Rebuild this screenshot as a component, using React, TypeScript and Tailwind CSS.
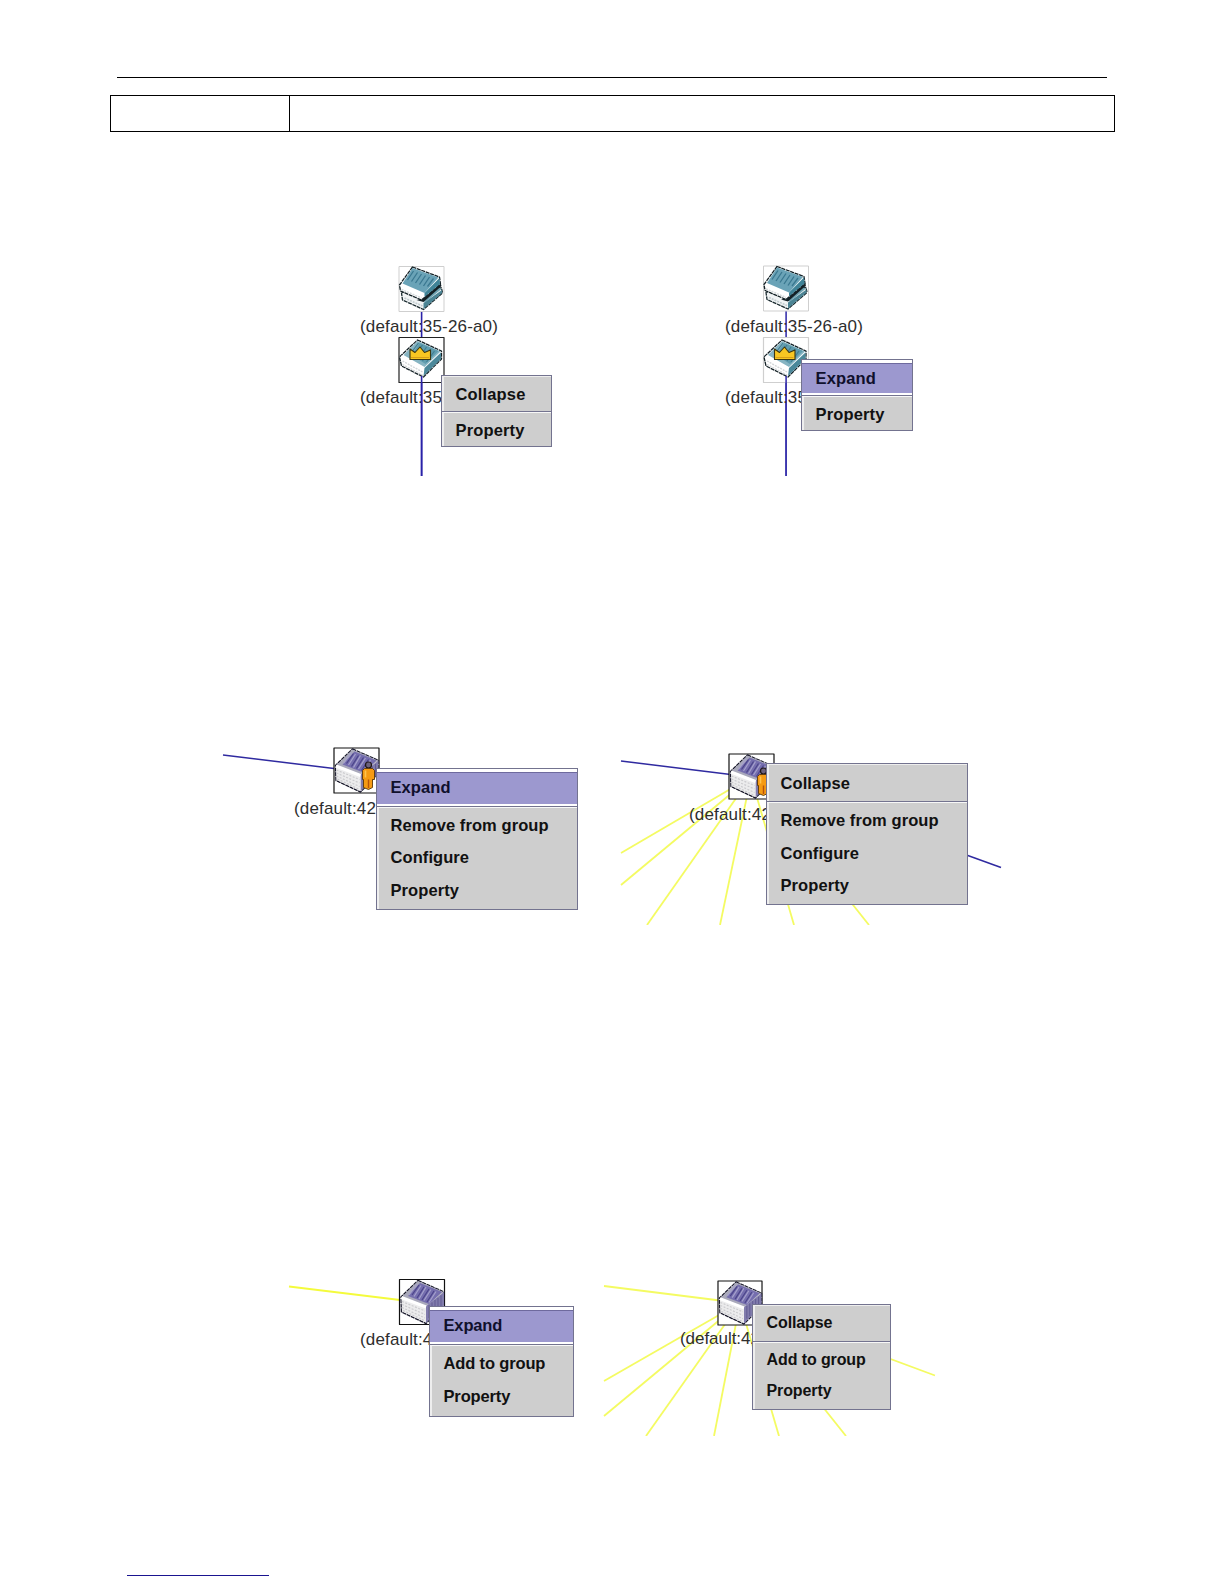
import React from "react";

const font = "font-['Liberation_Sans',Arial,sans-serif]";

function StackIcon({ x, y }: { x: number; y: number }) {
  return (
    <g transform={`translate(${x} ${y})`} strokeLinejoin="round">
      <rect x="0.5" y="0.5" width="45" height="45" fill="#fff" stroke="#cfcfcf" />
      <polygon points="3,27 20,20 43,22 44,27 25,43.500 4,34" fill="#f1f4f5" stroke="#1b2b30" strokeWidth="1.3" strokeDasharray="4 0.700" />
      <polygon points="25,37 43.500,24 43.500,27 25,43" fill="#4b8494" />
      <polygon points="20,34 36,20 43,23 27,36" fill="#6ea2b1" />
      <polygon points="22,33 42,17 43,20 25,36 18,34" fill="#142126" />
      <polygon points="14,1 41,11 42,18 23,34 2,25 1,19" fill="#fff" stroke="#142126" strokeWidth="1.3" strokeDasharray="4 0.700" />
      <polygon points="14,2 40,11.500 26,27 4,17.500" fill="#6aa3b7" />
      <polygon points="26,27 41,12 41.500,18 26,31" fill="#3f8397" />
      <path d="M15 5l-6 9M19 6.500l-6 9M23 8l-6 9M27 9.500l-6 9M31 11l-6 9M35 12.500l-6 8" stroke="#3a7890" strokeWidth="1.3" />
      <path d="M2.500 19.500L23 28.500" fill="none" stroke="#fff" strokeWidth="3" />
      <path d="M3 23.500L23 32" stroke="#d5dadc" strokeWidth="1.6" strokeDasharray="2 1" />
      <path d="M6 32L24 40" stroke="#c2cccf" strokeWidth="1.6" strokeDasharray="2 1" />
    </g>
  );
}

function CrownIcon({ x, y, frame }: { x: number; y: number; frame: string }) {
  return (
    <g transform={`translate(${x} ${y})`} strokeLinejoin="round">
      <rect x="0.5" y="0.5" width="45" height="45" fill="#fff" stroke={frame} strokeWidth="1.2" />
      <polygon points="19,3 43,14 43,22 25,40 3,29 1,20" fill="#fff" stroke="#142126" strokeWidth="1.3" strokeDasharray="4 0.700" />
      <polygon points="19,4 42,14.500 26,30 5,18" fill="#86b4c2" />
      <polygon points="21,6 40,14 27,27 13,18" fill="#5f9cae" />
      <polygon points="26,31 42.500,15.500 42.500,22 25,39" fill="#4b889a" />
      <path d="M20 6l-6 8M24 8l-6 8M28 10l-8 12M32 12l-8 12M36 14l-8 11" stroke="#417e93" strokeWidth="1.2" />
      <path d="M2.500 19.500L24 31" stroke="#fff" strokeWidth="3" />
      <path d="M4 24L24 35M4 27.500L24 38" stroke="#d3d7d9" strokeWidth="1.4" strokeDasharray="2 1" />
      <path d="M11.500 12l5 3.500 5-5.500 4.500 5.500 6-2.500v9.500H11.500z" fill="#f8c722" stroke="#3d360f" strokeWidth="1.1" />
      <path d="M12.500 20.500h18" stroke="#d8a018" strokeWidth="1" />
    </g>
  );
}

function ChassisIcon({ x, y, person, size = 46 }: { x: number; y: number; person?: boolean; size?: number }) {
  return (
    <g transform={`translate(${x} ${y}) scale(${size / 46})`} strokeLinejoin="round">
      <rect x="0.5" y="0.5" width="45" height="45" fill="#fff" stroke="#111" strokeWidth="1.2" />
      <polygon points="19,1.500 45,13 45,26 27,44.500 2.500,33 2,18" fill="#e6e6e8" stroke="#18182a" strokeWidth="1.4" strokeDasharray="4 0.700" />
      <polygon points="19,2 44.500,13 27,27 3,18" fill="#a9a9bb" />
      <polygon points="21,4 43,13 30,25 9,17" fill="#756eae" />
      <path d="M18 5l-8 11M22 6.500l-7 11M27 8l-7 12M32 10.500l-7 11M37 12.500l-7 11" stroke="#a5a1cc" strokeWidth="1.2" />
      <path d="M20 6l-7 10M25 8l-7 11M30 10l-7 11M35 12l-7 11" stroke="#4b448a" strokeWidth="1.2" />
      <polygon points="27,27 45,13 45,26 27,44" fill="#817cac" />
      <path d="M30 26v13M33 23.500v13M36 21v13M39 19v12M42 16.500v12" stroke="#5d5790" strokeWidth="0.9" />
      <polygon points="2.500,18 27,27 27,43.500 3,32.500" fill="#ececed" />
      <path d="M3 22.500L26 32M3 25.500L26 35.500M3 28.500L26 39M4 31.500L26 42" stroke="#cbcbce" strokeWidth="1.2" strokeDasharray="2 1.500" />
      <path d="M2.500 18.500L27 28" stroke="#fff" strokeWidth="3" />
      {person && (
        <g>
          <circle cx="35" cy="17.500" r="3" fill="#6c617d" stroke="#201818" strokeWidth="1.2" />
          <path d="M31 21h8l2 2v9h-2v8l-4 2-5-2v-8h-1v-9z" fill="#f59a13" stroke="#5a3808" strokeWidth="0.9" />
          <path d="M35 32v8.500" stroke="#b7530a" strokeWidth="1.4" />
          <path d="M32 23v7" stroke="#ffc44d" strokeWidth="1.600" />
        </g>
      )}
    </g>
  );
}

function Label({ className, children }: { className: string; children: string }) {
  return (
    <span className={`absolute whitespace-nowrap text-[17px] leading-5 tracking-[0.16px] text-[#2e2e2e] ${className}`}>
      {children}
    </span>
  );
}

type MenuProps = {
  className: string;
  first: string;
  firstHeight: string;
  items: string[];
  itemHeight: string;
  active?: boolean;
};

function Menu({ className, first, firstHeight, items, itemHeight, active }: MenuProps) {
  return (
    <div
      className={`absolute flex flex-col border border-[#73738f] bg-[#cecece] font-bold leading-5 text-[#111] ${className}`}
    >
      <div
        className={`flex shrink-0 items-center ${firstHeight} ${
          active
            ? "border-b-2 border-t-[3px] border-white bg-[#9c98cf] pb-0.5 pl-[13.5px] text-[#10102c] shadow-[inset_0_1px_0_#6e6a9e]"
            : "border-l-2 border-t border-[#eeeeee] pb-px pl-[11.500px]"
        }`}
      >
        {first}
      </div>
      <div className="h-0.5 shrink-0 border-b border-t border-b-[#f7f7f7] border-t-[#73738f]" />
      <div className="flex min-h-0 grow flex-col border-l-2 border-[#eeeeee] pl-[11.500px] pt-px">
        {items.map((t) => (
          <div key={t} className={`flex shrink-0 items-center whitespace-nowrap ${itemHeight}`}>
            {t}
          </div>
        ))}
      </div>
    </div>
  );
}

type Pt = [number, number];

function Rays({ from, to, color, width }: { from: Pt; to: Pt[]; color: string; width: number }) {
  return (
    <g stroke={color} strokeWidth={width}>
      {to.map(([x, y]) => (
        <line key={`${x}-${y}`} x1={from[0]} y1={from[1]} x2={x} y2={y} />
      ))}
    </g>
  );
}

export default function App() {
  return (
    <main className={`flex h-[1584px] w-[1224px] flex-col overflow-hidden bg-white ${font}`}>
      <div className="ml-[117px] mt-[77px] h-px w-[990px] shrink-0 bg-black" />
      <div className="ml-[110px] mt-[17px] flex h-[37px] w-[1005px] shrink-0 border border-black">
        <div className="w-[179px] border-r border-black" />
        <div className="grow" />
      </div>

      <section className="ml-[350px] mt-[123px] flex h-[225px] shrink-0 gap-[145px]">
        <figure className="relative h-[225px] w-[220px]">
          <svg className="block" width="220" height="225" viewBox="350 255 220 225">
            <rect x="420.800" y="300" width="1.600" height="176" fill="#2a22a8" />
            <StackIcon x={398.500} y={266} />
            <CrownIcon x={398.500} y={337} frame="#222" />
            <rect x="420.800" y="376" width="1.600" height="100" fill="#2a22a8" />
          </svg>
          <Label className="left-[10px] top-[62px]">(default:35-26-a0)</Label>
          <Label className="left-[10px] top-[133px]">(default:35</Label>
          <Menu
            className="left-[91px] top-[120px] h-[72px] w-[111px] text-[16.5px] tracking-[0.15px]"
            first="Collapse"
            firstHeight="h-[35px]"
            items={["Property"]}
            itemHeight="h-[31px]"
          />
        </figure>
        <figure className="relative h-[225px] w-[220px]">
          <svg className="block" width="220" height="225" viewBox="715 255 220 225">
            <rect x="785.300" y="300" width="1.600" height="176" fill="#3a34ad" />
            <StackIcon x={763} y={265.500} />
            <CrownIcon x={763} y={337} frame="#cfcfcf" />
            <rect x="785.300" y="376" width="1.600" height="100" fill="#3a34ad" />
          </svg>
          <Label className="left-[10px] top-[62px]">(default:35-26-a0)</Label>
          <Label className="left-[10px] top-[133px]">(default:35</Label>
          <Menu
            className="left-[86px] top-[104px] h-[72px] w-[112px] text-[16.5px] tracking-[0.15px]"
            first="Expand"
            firstHeight="h-[35px] !pb-0"
            items={["Property"]}
            itemHeight="h-[31px]"
            active
          />
        </figure>
      </section>

      <section className="ml-[215px] mt-[255px] flex h-[190px] shrink-0 gap-[15px]">
        <figure className="relative h-[190px] w-[380px]">
          <svg className="block" width="380" height="190" viewBox="215 735 380 190">
            <line x1="223" y1="755" x2="334" y2="768.500" stroke="#2f2aa0" strokeWidth="1.500" />
            <ChassisIcon x={333.500} y={747.500} person />
          </svg>
          <Label className="left-[79px] top-[64px]">(default:42</Label>
          <Menu
            className="left-[161px] top-[33px] h-[142px] w-[202px] text-[16.5px] tracking-[0.08px]"
            first="Expand"
            firstHeight="h-[37px]"
            items={["Remove from group", "Configure", "Property"]}
            itemHeight="h-[32.300px]"
            active
          />
        </figure>
        <figure className="relative h-[190px] w-[400px]">
          <svg className="block" width="400" height="190" viewBox="610 735 400 190">
            <Rays
              from={[751, 777]}
              to={[[621, 853], [621, 885], [647, 925], [720, 925], [794, 925], [869, 925]]}
              color="#f4fb62"
              width={1.8}
            />
            <Rays from={[751, 777]} to={[[621, 761], [1001, 867.5]]} color="#2f2aa0" width={1.5} />
            <ChassisIcon x={728.500} y={753.500} person />
          </svg>
          <Label className="left-[79px] top-[70px]">(default:42</Label>
          <Menu
            className="left-[156px] top-[28px] h-[142px] w-[202px] text-[16.5px] tracking-[0.08px]"
            first="Collapse"
            firstHeight="h-[37px]"
            items={["Remove from group", "Configure", "Property"]}
            itemHeight="h-[32.500px]"
          />
        </figure>
      </section>

      <section className="ml-[280px] mt-[345px] flex h-[166px] shrink-0 gap-[5px]">
        <figure className="relative h-[166px] w-[310px]">
          <svg className="block" width="310" height="166" viewBox="280 1270 310 166">
            <line x1="289" y1="1286.500" x2="400" y2="1300" stroke="#f4fb3c" strokeWidth="2" />
            <ChassisIcon x={399} y={1279} />
          </svg>
          <Label className="left-[80px] top-[60px]">(default:42</Label>
          <Menu
            className="left-[149px] top-[36px] h-[111px] w-[145px] text-[16.5px] tracking-[-0.15px]"
            first="Expand"
            firstHeight="h-[37px]"
            items={["Add to group", "Property"]}
            itemHeight="h-[32.500px]"
            active
          />
        </figure>
        <figure className="relative h-[166px] w-[350px]">
          <svg className="block" width="350" height="166" viewBox="595 1270 350 166">
            <Rays
              from={[740, 1303]}
              to={[[604, 1286], [604, 1381], [604, 1416], [646, 1436], [714, 1436], [779, 1436], [846, 1436], [935, 1375.5]]}
              color="#f4fb62"
              width={1.8}
            />
            <ChassisIcon x={717.500} y={1280.500} size={45} />
          </svg>
          <Label className="left-[85px] top-[59px] !tracking-[-0.05px]">(default:42</Label>
          <Menu
            className="left-[157px] top-[34px] h-[106px] w-[139px] text-[16px] tracking-[-0.1px]"
            first="Collapse"
            firstHeight="h-[36px]"
            items={["Add to group", "Property"]}
            itemHeight="h-[31px]"
          />
        </figure>
      </section>

      <div className="ml-[127px] mt-[139px] h-px w-[142px] shrink-0 bg-[#1a1490]" />
    </main>
  );
}
